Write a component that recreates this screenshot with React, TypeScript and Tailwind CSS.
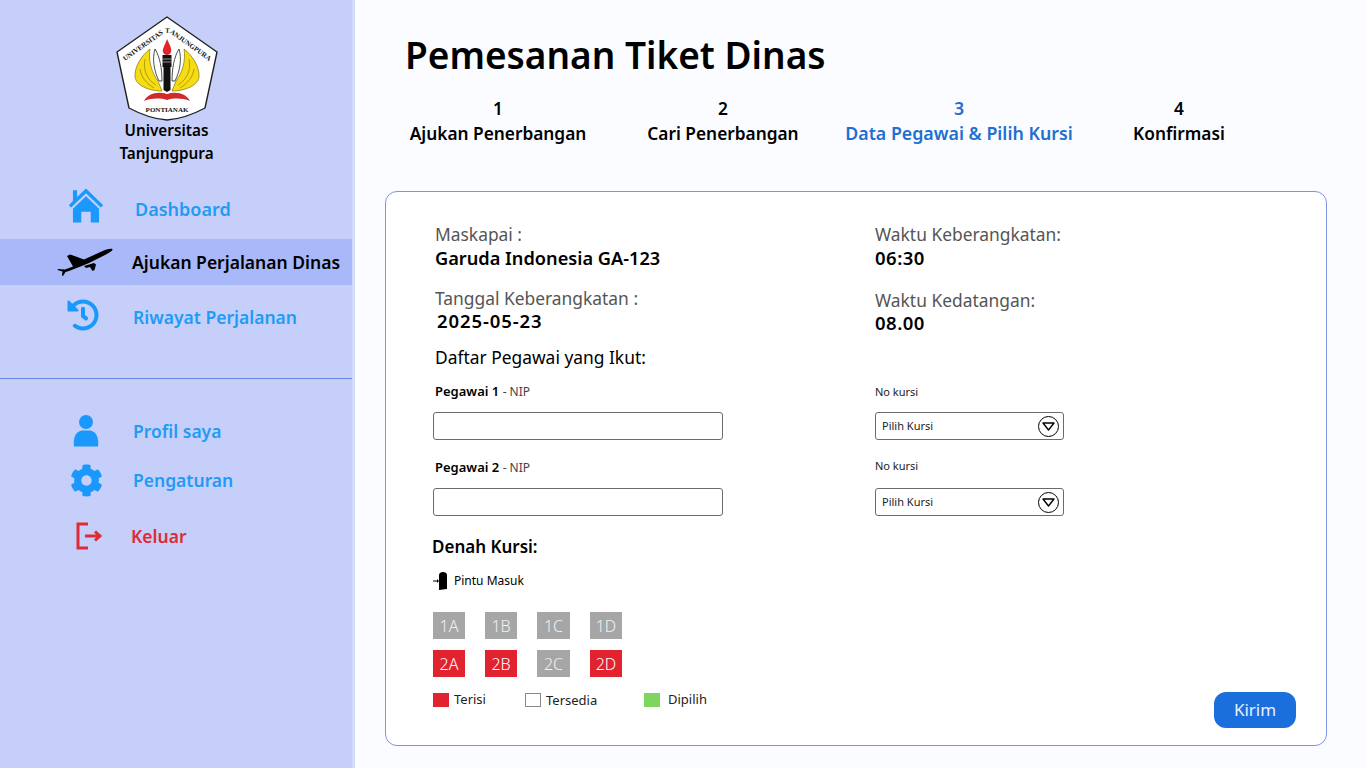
import { FaCog, FaHistory } from "react-icons/fa"

const font = { fontFamily: '"Noto Sans", "Open Sans", sans-serif' }

const HomeIcon = () => (
  <svg width="36" height="35" viewBox="3 6 30 29.5" fill="#1b98fb">
    <path d="M18 6.5 L32.5 20.5 L30.5 22.5 L18 10.5 L5.5 22.5 L3.5 20.5 L7 17 L7 8 L10.5 8 L10.5 13.5 Z" />
    <path d="M18 13 L29 23.5 L29 35 L22 35 L22 26 L14 26 L14 35 L7 35 L7 23.5 Z" />
  </svg>
)

const PlaneIcon = () => (
  <svg width="56" height="28" viewBox="0 0 56 28" fill="#000">
    <path d="M55.5 1.2 C56 2.5 52 5 48 7 L32 15 L26 17.6 L12 23 L8.5 24 L6 28 L5 27.5 L5.5 23.6 L0.5 22 L1 21 L8 21.5 L16 18.5 L10 8 L13 6.5 L14 6.8 L27 11.5 L44 3.8 C49 1.5 54 0.2 55.5 1.2 Z" />
    <path d="M27 18 L37 15 L39 16.5 L37.5 22 L35.5 23 L33 19 L29 20 Z" />
  </svg>
)

const PersonIcon = () => (
  <svg width="26" height="32" viewBox="0 0 26 32" fill="#1b98fb">
    <circle cx="13" cy="7" r="7" />
    <path d="M1 31.5 C0 24 2 16.5 9 15.5 L17 15.5 C24 16.5 26 24 25 31.5 Z" />
  </svg>
)

const LogoutIcon = () => (
  <svg width="28" height="28" viewBox="0 0 28 28" fill="none" stroke="#dd2c35">
    <path d="M13 2 H3 V26 H13" strokeWidth="3" />
    <path d="M10 14 H25 M20 9.5 L25 14 L20 18.5" strokeWidth="3" />
  </svg>
)

const DoorIcon = () => (
  <svg width="14" height="18" viewBox="0 0 14 18" fill="#000">
    <path d="M6 3 C6 1 8 0 10 0 C12 0 14 1 14 3 V17 L6 18 Z" />
    <path d="M0 8.5 H4 V7 L6 9 L4 11 V9.5 H0 Z" />
  </svg>
)

const Logo = () => (
  <svg width="106" height="106" viewBox="0 0 106 106">
    <path d="M53 2 L103 37 L91 93 C78 100 66 104 53 105 C40 104 28 100 15 93 L3 37 Z" fill="#fff" stroke="#222" strokeWidth="1.4" strokeLinejoin="round" />
    <defs>
      <path id="arc" d="M11 46 L49 19 Q53 16.5 57 19 L95 46" />
    </defs>
    <text fontSize="7" fontWeight="700" fill="#111" style={{ fontFamily: '"Liberation Serif", serif' }}>
      <textPath href="#arc" startOffset="50%" textAnchor="middle">UNIVERSITAS TANJUNGPURA</textPath>
    </text>
    {/* wings */}
    <path d="M36 34 C28 40 20 52 21 62 C22 70 34 76 48 76 L44 66 C38 58 34 46 36 34 Z" fill="#f6dc12" stroke="#6b5f00" strokeWidth="0.6" />
    <path d="M70 34 C78 40 86 52 85 62 C84 70 72 76 58 76 L62 66 C68 58 72 46 70 34 Z" fill="#f6dc12" stroke="#6b5f00" strokeWidth="0.6" />
    <path d="M31 44 C29 54 32 64 42 70 M26 54 C27 62 32 68 40 73 M75 44 C77 54 74 64 64 70 M80 54 C79 62 74 68 66 73" fill="none" stroke="#6b5f00" strokeWidth="0.5" />
    {/* keris */}
    <path d="M41 34 C46 42 48 54 48 66 L45 66 C40 56 38 44 41 34 Z" fill="#fff" stroke="#222" strokeWidth="0.8" />
    <path d="M65 34 C60 42 58 54 58 66 L61 66 C66 56 68 44 65 34 Z" fill="#fff" stroke="#222" strokeWidth="0.8" />
    {/* torch */}
    <path d="M48.5 40 H57.5 V52 H56.5 V75 L53 77 L49.5 75 V52 H48.5 Z" fill="#111" />
    <path d="M48.5 44 H57.5 M48.5 47 H57.5" stroke="#eee" strokeWidth="0.6" />
    <path d="M53 24 C56 30 58 34 57 37 C56 41 50 41 49 37 C48 34 51 30 53 24 Z" fill="#e0262c" />
    {/* ribbon */}
    <path d="M30 86 C34 78 44 76 53 79 C62 76 72 78 76 86 C68 83 60 83 53 85 C46 83 38 83 30 86 Z" fill="#d02a2a" />
    <text x="53" y="97" fontSize="7" fontWeight="700" textAnchor="middle" fill="#111" style={{ fontFamily: '"Liberation Serif", serif' }}>PONTIANAK</text>
  </svg>
)

const Seat = ({ label, red, wide }: { label: string; red?: boolean; wide?: boolean }) => (
  <div className={`${wide ? "w-[33px]" : "w-[32px]"} h-[27px] flex items-center justify-center text-[16px] font-light ${red ? "bg-[#e0232e] text-white" : "bg-[#a6a6a6] text-[#f1f1f1]"}`}>
    {label}
  </div>
)

const Select = () => (
  <div className="w-[189px] h-[28px] rounded-[3px] border border-[#6b6b6b] flex items-center justify-between pl-[6px] pr-[4px] text-[11px] text-[#222]">
    Pilih Kursi
    <span className="w-[21px] h-[21px] rounded-full border-[1.5px] border-black flex items-center justify-center">
      <svg width="13" height="9" viewBox="0 0 13 9" fill="none" stroke="#000" strokeWidth="1.4">
        <path d="M1 1 H12 L6.5 8 Z" strokeLinejoin="round" />
      </svg>
    </span>
  </div>
)

const steps = [
  { w: "w-[226px]", n: "1", label: "Ajukan Penerbangan" },
  { w: "w-[224px]", n: "2", label: "Cari Penerbangan" },
  { w: "w-[248px]", n: "3", label: "Data Pegawai & Pilih Kursi", active: true },
  { w: "w-[192px]", n: "4", label: "Konfirmasi" },
]

export default function App() {
  return (
    <div style={font} className="w-[1366px] h-[768px] flex overflow-hidden bg-[#fafcff] text-black">
      {/* sidebar */}
      <aside className="w-[355px] h-full bg-[#c5cffa] border-r-[3px] border-[#d3dbfb] flex flex-col shrink-0">
        <div className="pl-[114px] pt-[15px]">
          <Logo />
        </div>
        <div className="pr-[19px] text-center text-[15.3px] leading-[23px] font-semibold mt-[-2px]">
          <p>Universitas</p>
          <p>Tanjungpura</p>
        </div>

        <div className="h-[50px] mt-[19px] flex items-center pl-[68px] gap-[31px] text-[18px] font-semibold text-[#1f9bf5]">
          <span className="-mt-[8px]"><HomeIcon /></span>
          Dashboard
        </div>
        <div className="h-[46px] mt-[5px] bg-[#a9b8f8] flex items-center pl-[57px] gap-[19px] text-[17.5px] font-semibold">
          <PlaneIcon />
          Ajukan Perjalanan Dinas
        </div>
        <div className="h-[50px] mt-[7px] flex items-center pl-[67px] gap-[34px] text-[17.5px] font-semibold text-[#1f9bf5]">
          <span className="-mt-[4px]"><FaHistory size={32} color="#1b98fb" /></span>
          Riwayat Perjalanan
        </div>

        <div className="h-px bg-[#6c84e6] mt-[36px]" />

        <div className="h-[50px] mt-[27px] flex items-center pl-[73px] gap-[34px] text-[17.5px] font-semibold text-[#1f9bf5]">
          <PersonIcon />
          Profil saya
        </div>
        <div className="h-[40px] mt-[4px] flex items-center pl-[70px] gap-[30px] text-[17.5px] font-semibold text-[#1f9bf5]">
          <FaCog size={33} color="#1b98fb" />
          Pengaturan
        </div>
        <div className="h-[40px] mt-[16px] flex items-center pl-[75px] gap-[28px] text-[17.5px] font-semibold text-[#dd2c35]">
          <LogoutIcon />
          Keluar
        </div>
      </aside>

      {/* content */}
      <main className="flex-1 pl-[30px] pr-[39px]">
        <h1 className="text-[37px] leading-[46px] font-semibold pl-[20px] pt-[32px]">Pemesanan Tiket Dinas</h1>

        <div className="flex mt-[18px] h-[64px] text-[17.3px] leading-[25px] font-semibold">
          {steps.map((s) => (
            <div key={s.n} className={`${s.w} text-center ${s.active ? "text-[#1e6fd0] text-[17.8px]" : ""}`}>
              <p>{s.n}</p>
              <p>{s.label}</p>
            </div>
          ))}
        </div>

        <section className="mt-[31px] w-[942px] h-[555px] rounded-[12px] border border-[#7f93e4] bg-white pl-[47px] pr-[30px] pt-[30px]">
          <div className="grid grid-cols-[442px_1fr] text-[17.4px] leading-[24px]">
            <div>
              <p className="text-[#555] pl-[2px]">Maskapai :</p>
              <p className="font-semibold pl-[2px] text-[18.2px]">Garuda Indonesia GA-123</p>
              <p className="text-[#555] pl-[2px] mt-[17px] leading-[22px]">Tanggal Keberangkatan :</p>
              <p className="font-semibold pl-[4px] text-[18.5px] leading-[23px] tracking-[0.9px]">2025-05-23</p>
            </div>
            <div>
              <p className="text-[#555]">Waktu Keberangkatan:</p>
              <p className="font-semibold text-[18.5px] tracking-[0.5px]">06:30</p>
              <p className="text-[#555] mt-[19px] leading-[22px]">Waktu Kedatangan:</p>
              <p className="font-semibold text-[18.5px] mt-px leading-[22px] tracking-[0.5px]">08.00</p>
            </div>
          </div>

          <p className="text-[17.4px] leading-[24px] pl-[2px] mt-[11px]">Daftar Pegawai yang Ikut:</p>

          <div className="grid grid-cols-[442px_1fr] mt-[13px]">
            <div>
              <p className="text-[13px] leading-[18px] pl-[2px]"><span className="font-semibold">Pegawai 1</span> <span className="text-[#444] text-[12px]">- NIP</span></p>
              <div className="w-[290px] h-[28px] rounded-[3px] border border-[#6b6b6b] mt-[11px]" />
              <p className="text-[13px] leading-[18px] pl-[2px] mt-[18px]"><span className="font-semibold">Pegawai 2</span> <span className="text-[#444] text-[12px]">- NIP</span></p>
              <div className="w-[290px] h-[28px] rounded-[3px] border border-[#6b6b6b] mt-[11px]" />
            </div>
            <div className="pt-px">
              <p className="text-[11px] leading-[18px] text-[#222]">No kursi</p>
              <div className="mt-[11px]"><Select /></div>
              <p className="text-[11px] leading-[18px] text-[#222] mt-[17px]">No kursi</p>
              <div className="mt-[13px]"><Select /></div>
            </div>
          </div>

          <p className="text-[17px] leading-[24px] font-semibold mt-[19px] -ml-px">Denah Kursi:</p>

          <div className="flex items-center gap-[7px] text-[12px] mt-[13px] h-[18px]">
            <DoorIcon />
            Pintu Masuk
          </div>

          <div className="flex gap-[20px] mt-[22px]">
            <Seat label="1A" />
            <Seat label="1B" />
            <Seat label="1C" wide />
            <Seat label="1D" />
          </div>
          <div className="flex gap-[20px] mt-[11px]">
            <Seat label="2A" red />
            <Seat label="2B" red />
            <Seat label="2C" wide />
            <Seat label="2D" red />
          </div>

          <div className="flex justify-between items-start mt-[15px]">
            <div className="flex text-[13px] leading-[16px] text-[#222]">
              <div className="flex w-[92px] gap-[5px]">
                <span className="w-[16px] h-[14px] mt-[1px] bg-[#e0232e]" />
                <span className="-mt-[1px]">Terisi</span>
              </div>
              <div className="flex w-[119px] gap-[5px]">
                <span className="w-[16px] h-[14px] mt-[1px] border border-[#888] bg-white" />
                Tersedia
              </div>
              <div className="flex gap-[8px]">
                <span className="w-[16px] h-[14px] mt-[1px] bg-[#7ed65f]" />
                <span className="-mt-[1px]">Dipilih</span>
              </div>
            </div>
            <div className="w-[82px] h-[36px] rounded-[12px] bg-[#1b6fdc] text-[#e8f0ff] text-[17px] flex items-center justify-center">
              Kirim
            </div>
          </div>
        </section>
      </main>
    </div>
  )
}
